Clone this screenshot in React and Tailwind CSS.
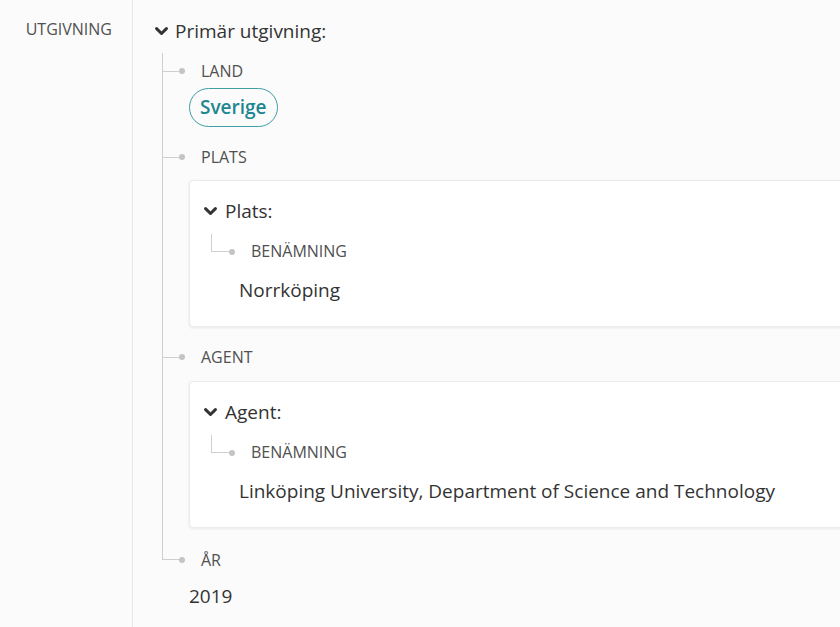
import React from 'react';

function Chevron() {
  return (
    <svg width="13" height="9" viewBox="0 0 13 9" className="shrink-0">
      <path d="M1.6 1.6 L6.5 6.5 L11.4 1.6" fill="none" stroke="#333" strokeWidth="3" strokeLinecap="round" strokeLinejoin="round" />
    </svg>
  );
}

function Dot() {
  return <span className="block w-[6px] h-[6px] rounded-full bg-[#c4c4c4] shrink-0"></span>;
}

// label row hanging off the main vertical line
function Branch({ label }) {
  return (
    <div className="flex items-center h-[20px]">
      <span className="block w-[16px] h-px bg-[#cfcfcf]"></span>
      <Dot />
      <span className="ml-[16px] text-[16px] leading-[20px] text-[#505050] uppercase">{label}</span>
    </div>
  );
}

function Card({ title, label, value }) {
  return (
    <div className="ml-[26px] w-[700px] bg-white rounded-[4px] border border-[#ececec] shadow-[0_1px_3px_rgba(0,0,0,0.08)] pt-[18px] pb-[24px] pl-[14px]">
      <div className="flex items-center h-[24px] gap-[8px]">
        <Chevron />
        <span className="text-[19px] leading-[24px] text-[#333]">{title}</span>
      </div>
      <div className="flex items-start mt-[11px]">
        <span className="block ml-[7px] w-[18px] h-[18px] border-l border-b border-[#cfcfcf]"></span>
        <span className="mt-[15px]"><Dot /></span>
        <span className="ml-[16px] mt-[7px] text-[16px] leading-[20px] text-[#505050] uppercase">{label}</span>
      </div>
      <div className="ml-[35px] mt-[17px] text-[19px] leading-[24px] text-[#333]">{value}</div>
    </div>
  );
}

export default function App() {
  return (
    <div
      className="w-[840px] h-[627px] overflow-hidden bg-[#fbfbfb] flex"
      style={{ fontFamily: '"Open Sans", "Noto Sans", sans-serif' }}
    >
      {/* Left label column */}
      <div className="w-[133px] shrink-0 border-r border-[#e6e6e6] pt-[17px] pr-[20px] text-right">
        <span className="text-[16px] leading-[20px] text-[#505050] uppercase">Utgivning</span>
      </div>

      {/* Value column */}
      <div className="flex-1 pt-[19px] pl-[22px]">
        <div className="flex items-center h-[24px] gap-[7px]">
          <Chevron />
          <span className="text-[19px] leading-[24px] text-[#333]">Primär utgivning:</span>
        </div>

        <div className="ml-[7px] mt-[10px]">
          <div className="border-l border-[#cfcfcf] pt-[8px] pb-[22px]">
            <Branch label="Land" />
            <div className="ml-[26px] mt-[7px]">
              <span className="inline-flex items-center h-[39px] px-[10px] rounded-full border border-[#3f9ea6] text-[#1e8690] text-[19px] font-semibold">
                Sverige
              </span>
            </div>

            <div className="mt-[20px]">
              <Branch label="Plats" />
            </div>
            <div className="mt-[13px]">
              <Card title="Plats:" label="Benämning" value="Norrköping" />
            </div>

            <div className="mt-[20px]">
              <Branch label="Agent" />
            </div>
            <div className="mt-[14px]">
              <Card
                title="Agent:"
                label="Benämning"
                value="Linköping University, Department of Science and Technology"
              />
            </div>
          </div>

          {/* last branch closes the line */}
          <div className="flex items-start h-[20px]">
            <span className="block w-[17px] h-[10px] border-l border-b border-[#cfcfcf]"></span>
            <span className="mt-[7px]"><Dot /></span>
            <span className="ml-[16px] text-[16px] leading-[20px] text-[#505050] uppercase">År</span>
          </div>
          <div className="ml-[27px] mt-[14px] text-[19px] leading-[24px] text-[#333]">2019</div>
        </div>
      </div>
    </div>
  );
}
